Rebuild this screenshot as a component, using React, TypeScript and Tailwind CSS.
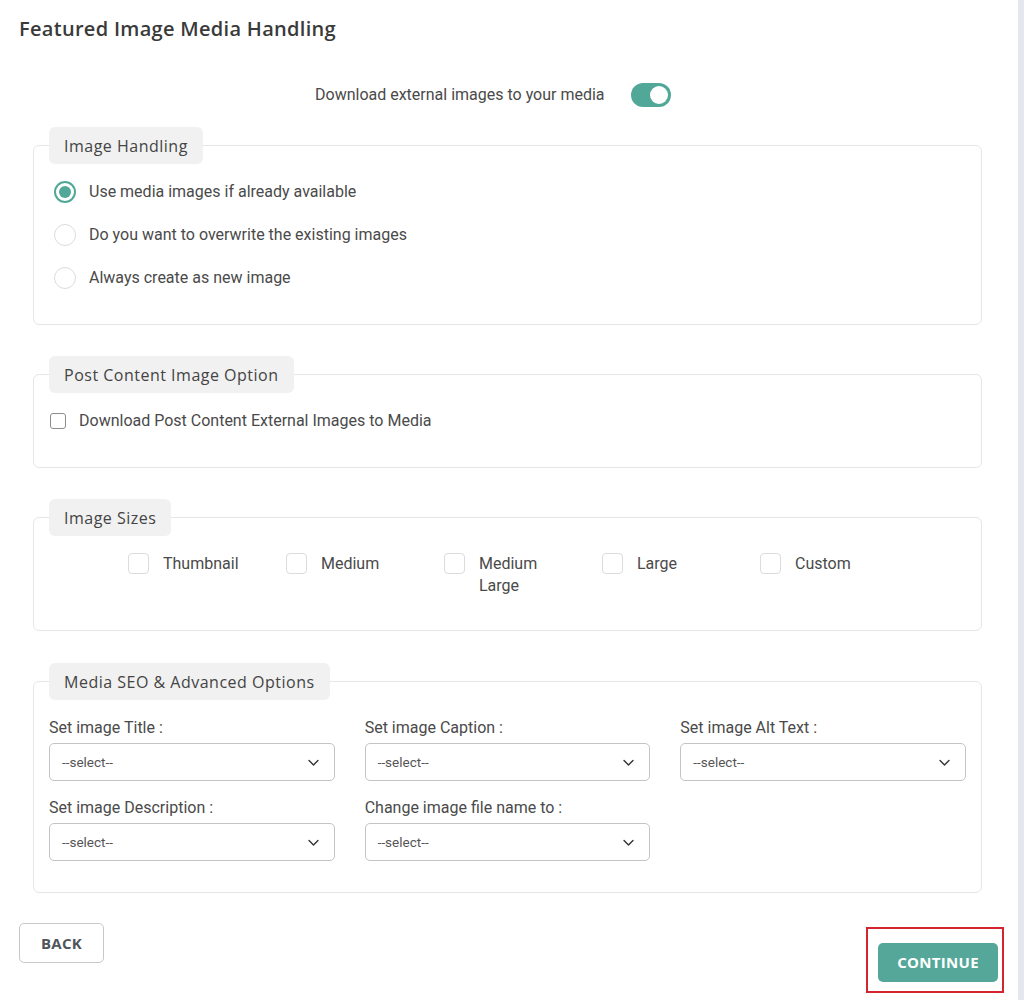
import React from "react";

const head = { fontFamily: '"Open Sans", "Noto Sans", sans-serif' };
const body = { fontFamily: 'Roboto, "Liberation Sans", sans-serif' };

function Chevron() {
  return (
    <svg width="13" height="13" viewBox="0 0 16 16" fill="none" stroke="#333" strokeWidth="1.7" strokeLinecap="round" strokeLinejoin="round">
      <path d="M2.5 5.5 8 11l5.5-5.5" />
    </svg>
  );
}

function Legend({ children }: { children: React.ReactNode }) {
  return (
    <legend
      className="ml-[15px] px-[15px] h-[37px] flex items-center bg-[#f1f1f1] rounded-[6px] text-[16px] tracking-[0.5px] text-[#444]"
      style={head}
    >
      {children}
    </legend>
  );
}

function Select({ label }: { label: string }) {
  return (
    <div className="flex flex-col">
      <div className="text-[16px] leading-[19px] text-[#4a4a4a] mb-[6px]">{label}</div>
      <div className="h-[38px] border border-[#c4c4c4] rounded-[5px] flex items-center justify-between pl-[12px] pr-[14px] text-[13.5px] text-[#555]">
        <span>--select--</span>
        <Chevron />
      </div>
    </div>
  );
}

function Radio({ checked, label }: { checked?: boolean; label: string }) {
  return (
    <div className="flex items-center h-[22px]">
      {checked ? (
        <span className="w-[22px] h-[22px] rounded-full border-2 border-[#52a898] flex items-center justify-center">
          <span className="w-[12px] h-[12px] rounded-full bg-[#52a898]" />
        </span>
      ) : (
        <span className="w-[22px] h-[22px] rounded-full border border-[#dcdcdc]" />
      )}
      <span className="ml-[13px] text-[16px] text-[#4a4a4a]">{label}</span>
    </div>
  );
}

function SizeBox({ label }: { label: string }) {
  return (
    <div className="w-[158px] flex items-start">
      <span className="w-[21px] h-[21px] shrink-0 rounded-[4px] border border-[#dcdcdc]" />
      <span className="ml-[14px] w-[85px] text-[16px] leading-[22px] text-[#4a4a4a]">{label}</span>
    </div>
  );
}

export default function App() {
  return (
    <div className="flex bg-white min-h-[1000px]" style={body}>
      <div className="w-[1018px] flex flex-col">
        <div className="px-[19px] pt-[16px]">
          <h1 className="text-[20px] leading-[26px] font-semibold tracking-[0.3px] text-[#3a3a3a]" style={head}>
            Featured Image Media Handling
          </h1>
          <div className="mt-[41px] flex items-center pl-[296px] h-[24px]">
            <span className="text-[16px] text-[#4a4a4a]">Download external images to your media</span>
            <span className="ml-[26px] w-[40px] h-[24px] rounded-full bg-[#52a898] flex items-center justify-end pr-[3px]">
              <span className="w-[18px] h-[18px] rounded-full bg-white" />
            </span>
          </div>
        </div>

        <div className="ml-[33px] mr-[36px] mt-[20px] flex flex-col gap-[31px]">
          <fieldset className="border border-[#e6e6e6] rounded-[6px] p-0">
            <Legend>Image Handling</Legend>
            <div className="flex flex-col gap-[21px] px-[20px] pt-[17px] pb-[35px]">
              <Radio checked label="Use media images if already available" />
              <Radio label="Do you want to overwrite the existing images" />
              <Radio label="Always create as new image" />
            </div>
          </fieldset>

          <fieldset className="border border-[#e6e6e6] rounded-[6px] p-0">
            <Legend>Post Content Image Option</Legend>
            <div className="flex items-center h-[16px] px-[16px] mt-[20px] mb-[38px]">
              <span className="w-[16px] h-[16px] rounded-[3px] border border-[#8c8c8c]" />
              <span className="ml-[13px] text-[16px] text-[#4a4a4a]">Download Post Content External Images to Media</span>
            </div>
          </fieldset>

          <fieldset className="border border-[#e6e6e6] rounded-[6px] p-0">
            <Legend>Image Sizes</Legend>
            <div className="flex pl-[94px] pt-[17px] pb-[33px]">
              <SizeBox label="Thumbnail" />
              <SizeBox label="Medium" />
              <SizeBox label="Medium Large" />
              <SizeBox label="Large" />
              <SizeBox label="Custom" />
            </div>
          </fieldset>

          <fieldset className="border border-[#e6e6e6] rounded-[6px] p-0 mt-[1px]">
            <Legend>Media SEO &amp; Advanced Options</Legend>
            <div className="grid grid-cols-3 gap-x-[30px] gap-y-[17px] px-[15px] pt-[18px] pb-[31px]">
              <Select label="Set image Title :" />
              <Select label="Set image Caption :" />
              <Select label="Set image Alt Text :" />
              <Select label="Set image Description :" />
              <Select label="Change image file name to :" />
            </div>
          </fieldset>
        </div>

        <div className="flex justify-between items-start pl-[19px] pr-[14px] mt-[30px]">
          <button
            className="w-[85px] h-[40px] border border-[#c8c8c8] rounded-[5px] text-[15px] font-bold text-[#50555b] tracking-[0.3px]"
            style={head}
          >
            BACK
          </button>
          <div className="mt-[4px] border-2 border-[#d42430] pl-[10px] pt-[14px] pr-[4px] pb-[9px]">
            <button
              className="w-[120px] h-[39px] rounded-[5px] bg-[#55a899] text-white text-[15px] font-bold tracking-[0.3px]"
              style={head}
            >
              CONTINUE
            </button>
          </div>
        </div>
      </div>
      <div className="w-[6px] bg-[#e4e8ee]" />
    </div>
  );
}
